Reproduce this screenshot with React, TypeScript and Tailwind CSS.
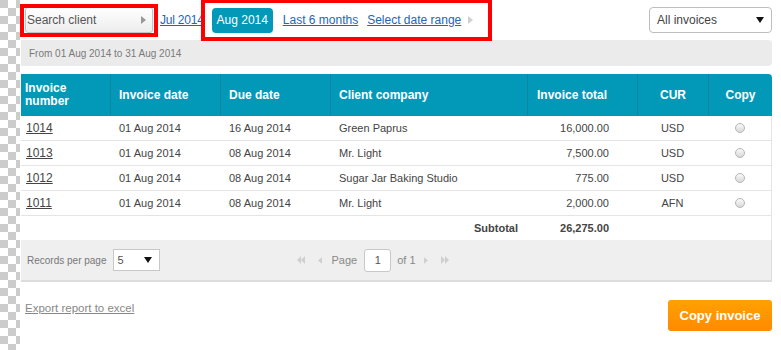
const rows = [
  { no: '1014', date: '01 Aug 2014', due: '16 Aug 2014', client: 'Green Paprus', total: '16,000.00', cur: 'USD' },
  { no: '1013', date: '01 Aug 2014', due: '08 Aug 2014', client: 'Mr. Light', total: '7,500.00', cur: 'USD' },
  { no: '1012', date: '01 Aug 2014', due: '08 Aug 2014', client: 'Sugar Jar Baking Studio', total: '775.00', cur: 'USD' },
  { no: '1011', date: '01 Aug 2014', due: '08 Aug 2014', client: 'Mr. Light', total: '2,000.00', cur: 'AFN' },
]

function Tri({ dir, color, className }: { dir: 'right' | 'down' | 'left'; color: string; className?: string }) {
  const pts = dir === 'right' ? '0,0 5,4 0,8' : dir === 'left' ? '5,0 0,4 5,8' : '0,0 8,0 4,6'
  const w = dir === 'down' ? 8 : 5
  const h = dir === 'down' ? 6 : 8
  return (
    <svg width={w} height={h} viewBox={`0 0 ${w} ${h}`} className={className}>
      <polygon points={pts} fill={color} />
    </svg>
  )
}

function DoubleTri({ dir }: { dir: 'left' | 'right' }) {
  const pts = dir === 'left' ? ['4,0 0,4 4,8', '8,0 4,4 8,8'] : ['0,0 4,4 0,8', '4,0 8,4 4,8']
  return (
    <svg width={8} height={8} viewBox="0 0 8 8">
      {pts.map((p) => (
        <polygon key={p} points={p} fill="#cfcfcf" />
      ))}
    </svg>
  )
}

function Radio() {
  return (
    <span className="mx-auto block h-[10px] w-[10px] rounded-full border border-[#b5b5b5] bg-[linear-gradient(#fafafa,#d8d8d8)]" />
  )
}

export default function App() {
  return (
    <div className="flex h-[350px] w-[781px] overflow-hidden bg-white font-['Liberation_Sans',Arial,sans-serif] text-[#444]">
      <div className="h-full w-5 shrink-0 bg-[conic-gradient(#fff_0_25%,#cccccc_0_50%,#fff_0_75%,#cccccc_0)] bg-[length:16px_16px]" />

      <div className="relative ml-px w-[751px]">
        {/* top filter row */}
        <div className="flex h-10 items-center">
          <div className="ml-1 flex h-[26px] w-[128px] items-center justify-between rounded-[3px] border border-[#c4c4c4] bg-[linear-gradient(#fff,#ececec)] pl-[1px] pr-[6px] text-[12px] text-[#555]">
            Search client
            <Tri dir="right" color="#999" />
          </div>
          <a className="ml-[7px] text-[12px] tracking-[-0.2px] text-[#2166b5] underline">Jul 2014</a>
          <span className="ml-[8px] flex h-[25px] w-[61px] items-center justify-center rounded-[4px] bg-[#0299b9] text-[12px] text-white">
            Aug 2014
          </span>
          <a className="ml-[10px] text-[12px] text-[#2166b5] underline">Last 6 months</a>
          <a className="ml-[9px] text-[12px] text-[#2166b5] underline">Select date range</a>
          <Tri dir="right" color="#d0d0d0" className="ml-[7px]" />
          <div className="ml-auto mr-0 flex h-[26px] w-[123px] items-center justify-between rounded-[4px] border border-[#bdbdbd] bg-white pl-[7px] pr-[7px] text-[12px] text-[#444]">
            All invoices
            <Tri dir="down" color="#111" />
          </div>
        </div>

        <div className="flex h-[26px] items-center rounded-r-[4px] bg-[#ebebeb] pl-2 text-[10px] text-[#7a7a7a]">
          From 01 Aug 2014 to 31 Aug 2014
        </div>

        {/* invoices table */}
        <table className="mt-2 w-full table-fixed border-separate border-spacing-0 text-[11px]">
          <colgroup>
            <col className="w-[89px]" />
            <col className="w-[110px]" />
            <col className="w-[110px]" />
            <col className="w-[197px]" />
            <col className="w-[110px]" />
            <col className="w-[71px]" />
            <col className="w-[64px]" />
          </colgroup>
          <thead>
            <tr className="h-[42px] bg-[#0299b9] text-left text-[12px] font-bold leading-[13px] text-white">
              <th className="pl-1 pr-2">Invoice number</th>
              <th className="border-l border-[#0b86a1] pl-[8px]">Invoice date</th>
              <th className="border-l border-[#0b86a1] pl-[8px]">Due date</th>
              <th className="border-l border-[#0b86a1] pl-[8px]">Client company</th>
              <th className="border-l border-[#0b86a1] pl-[9px]">Invoice total</th>
              <th className="border-l border-[#0b86a1] text-center">CUR</th>
              <th className="rounded-tr-[4px] border-l border-[#0b86a1] text-center">Copy</th>
            </tr>
          </thead>
          <tbody>
            {rows.map((r) => (
              <tr key={r.no} className="h-[25px]">
                <td className="border-b border-[#e4e4e4] pl-[5px] text-[12px]">
                  <a className="underline">{r.no}</a>
                </td>
                <td className="border-b border-[#e4e4e4] pl-[9px]">{r.date}</td>
                <td className="border-b border-[#e4e4e4] pl-[9px]">{r.due}</td>
                <td className="border-b border-[#e4e4e4] pl-[9px]">{r.client}</td>
                <td className="border-b border-[#e4e4e4] pr-7 text-right">{r.total}</td>
                <td className="border-b border-[#e4e4e4] text-center">{r.cur}</td>
                <td className="border-b border-r border-[#e4e4e4]">
                  <Radio />
                </td>
              </tr>
            ))}
            <tr className="h-[24px] font-bold">
              <td />
              <td />
              <td />
              <td className="pr-[9px] text-right">Subtotal</td>
              <td className="pr-7 text-right">26,275.00</td>
              <td />
              <td className="border-r border-[#e4e4e4]" />
            </tr>
          </tbody>
        </table>

        {/* pager */}
        <div className="flex h-[42px] items-center border-b-2 border-r border-[#dcdcdc] bg-[#efefef] text-[10px] text-[#777]">
          <span className="ml-[6px]">Records per page</span>
          <div className="ml-[6px] flex h-[22px] w-[47px] items-center justify-between border border-[#c8c8c8] bg-white pl-[4px] pr-[7px] text-[11px] text-[#555]">
            5
            <Tri dir="down" color="#111" />
          </div>
          <div className="ml-[137px] flex items-center text-[11px] text-[#888]">
            <DoubleTri dir="left" />
            <Tri dir="left" color="#cfcfcf" className="ml-[13px] h-[7px] w-[4px]" />
            <span className="ml-[10px]">Page</span>
            <span className="ml-[7px] flex h-[23px] w-[27px] items-center justify-center rounded-[3px] border border-[#c8c8c8] bg-white text-[#555]">
              1
            </span>
            <span className="ml-[6px]">of 1</span>
            <Tri dir="right" color="#cfcfcf" className="ml-[8px] h-[7px] w-[4px]" />
            <span className="ml-[13px]">
              <DoubleTri dir="right" />
            </span>
          </div>
        </div>

        <div className="mt-[18px] flex items-start justify-between">
          <a className="ml-1 text-[11.5px] text-[#888] underline">Export report to excel</a>
          <button className="h-[31px] w-[104px] rounded-[3px] bg-[linear-gradient(#ffa100,#ff8a00)] text-[13px] font-bold text-white">
            Copy invoice
          </button>
        </div>

        {/* annotation boxes */}
        <div className="pointer-events-none absolute left-[-1px] top-1 h-[33px] w-[138px] border-4 border-[#ff0000]" />
        <div className="pointer-events-none absolute left-[180px] top-[-1px] h-[42px] w-[291px] border-4 border-[#ff0000]" />
      </div>
    </div>
  )
}
